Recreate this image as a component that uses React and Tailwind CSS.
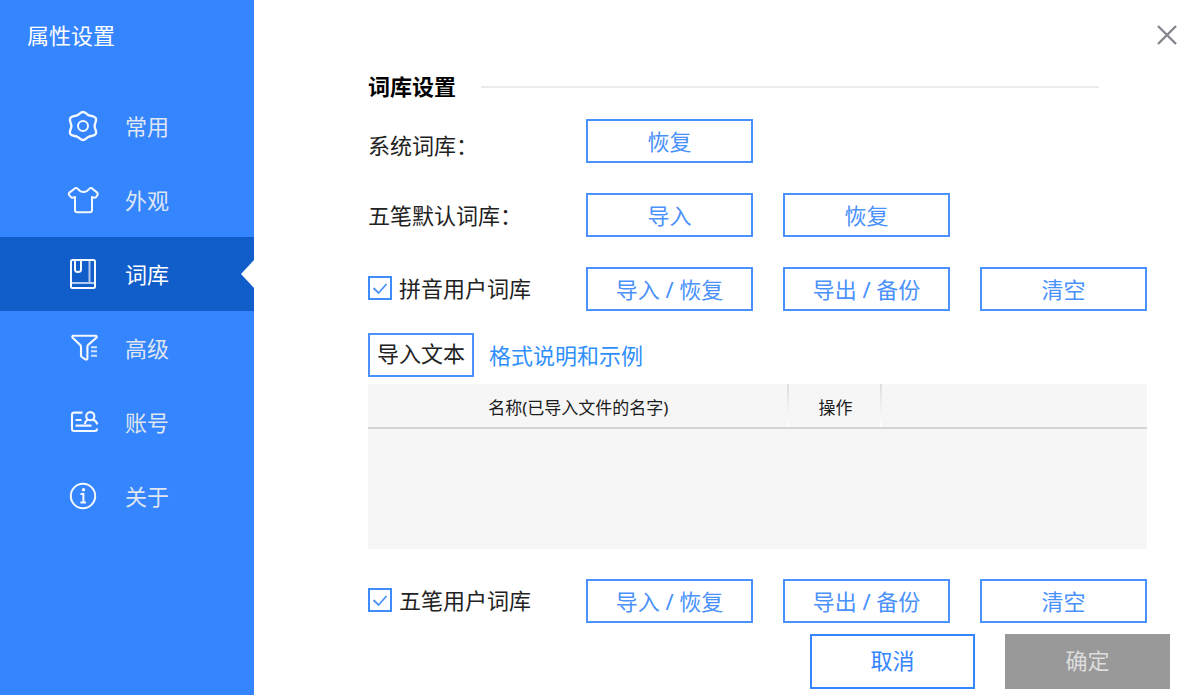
import { useState } from 'react'

const navItems = [
  { id: 'common', label: '常用', icon: GearIcon },
  { id: 'skin', label: '外观', icon: ShirtIcon },
  { id: 'dict', label: '词库', icon: BookIcon },
  { id: 'advanced', label: '高级', icon: FunnelIcon },
  { id: 'account', label: '账号', icon: AccountIcon },
  { id: 'about', label: '关于', icon: InfoIcon },
]

export default function App() {
  const [active, setActive] = useState('dict')

  return (
    <div className="flex min-h-screen bg-white font-['Noto_Sans','Noto_Sans_CJK_SC',sans-serif] text-[22px] leading-6 text-[#222222]">
      <aside className="w-[254px] shrink-0 bg-[#3585ff]">
        <h1 className="px-[27px] pt-[23px] text-white">属性设置</h1>
        <nav className="mt-[42px]">
          {navItems.map(({ id, label, icon: Icon }) => (
            <button
              key={id}
              type="button"
              onClick={() => setActive(id)}
              className={`relative flex h-[74px] w-full items-center gap-[26px] pl-[67px] ${
                active === id ? 'bg-[#115ecb] text-white' : 'text-[#dfe6f2]'
              }`}
            >
              <Icon className="h-8 w-8 shrink-0 text-[#f4f8ff]" />
              <span>{label}</span>
              {active === id && (
                <span className="absolute right-0 top-1/2 -translate-y-1/2 border-y-14 border-r-13 border-y-transparent border-r-white" />
              )}
            </button>
          ))}
        </nav>
      </aside>

      <main className="flex min-w-0 flex-1 flex-col">
        <div className="flex justify-end pr-[23px] pt-[25px]">
          <button type="button" aria-label="关闭" className="text-[#85858f]">
            <svg viewBox="0 0 20 20" className="h-5 w-5" fill="none" stroke="currentColor" strokeWidth="2.4">
              <path d="M1 1l18 18M19 1L1 19" />
            </svg>
          </button>
        </div>

        <section className="pl-[114px] pr-[53px] pt-[30px]">
          <div className="flex items-center gap-[25px] pr-12">
            <h2 className="pb-0.5 font-bold leading-[22px] text-black">词库设置</h2>
            <div className="h-0.5 flex-1 bg-[#ebebeb]" />
          </div>

          <div className="mt-5 space-y-[30px]">
            <Row label={<span className="self-end leading-9">系统词库：</span>}>
              <ActionButton>恢复</ActionButton>
            </Row>
            <Row label={<span>五笔默认词库：</span>}>
              <ActionButton>导入</ActionButton>
              <ActionButton>恢复</ActionButton>
            </Row>
            <UserDictRow label="拼音用户词库" />
          </div>

          <div className="mt-[22px] flex items-center gap-[15px]">
            <button type="button" className="h-11 border-2 border-[#4a91fc] px-[7px] pb-1">
              导入文本
            </button>
            <a href="#format" className="text-[#2f8ffb]">
              格式说明和示例
            </a>
          </div>

          <div className="mt-[7px] mb-[30px] min-h-[165px] bg-[#f6f6f6]">
            <table className="w-full table-fixed text-[17px] text-[#1c1c1c]">
              <thead>
                <tr className="h-11 border-b-2 border-[#d4d4d4]">
                  <HeaderCell className="w-[54%]">名称(已导入文件的名字)</HeaderCell>
                  <HeaderCell className="w-[12%]">操作</HeaderCell>
                  <td />
                </tr>
              </thead>
            </table>
          </div>

          <UserDictRow label="五笔用户词库" />
        </section>

        <footer className="flex justify-end gap-[30px] pb-1.5 pr-[30px] pt-[11px]">
          <button type="button" className="h-[55px] w-[165px] border-2 border-[#3585ff] pb-1 text-[#3585ff]">
            取消
          </button>
          <button type="button" className="h-[55px] w-[165px] bg-[#999999] pb-1 text-[#dddddd]">
            确定
          </button>
        </footer>
      </main>
    </div>
  )
}

function Row({ label, children }) {
  return (
    <div className="flex">
      <div className="flex h-11 w-[218px] shrink-0 items-center">{label}</div>
      <div className="grid flex-1 grid-cols-3 gap-[30px]">{children}</div>
    </div>
  )
}

function UserDictRow({ label }) {
  return (
    <Row
      label={
        <label className="flex items-center gap-[7px] pb-0.5">
          <span className="grid h-6 w-6 place-items-center">
            <input
              type="checkbox"
              defaultChecked
              className="peer col-start-1 row-start-1 h-6 w-6 appearance-none border-2 border-[#3f8afc] bg-white"
            />
            <svg
              viewBox="0 0 24 24"
              className="pointer-events-none invisible col-start-1 row-start-1 h-6 w-6 text-[#4a91fc] peer-checked:visible"
              fill="none"
              stroke="currentColor"
              strokeWidth="1.8"
            >
              <path d="M5.5 12l5 5L18.5 8" />
            </svg>
          </span>
          {label}
        </label>
      }
    >
      <ActionButton>导入 / 恢复</ActionButton>
      <ActionButton>导出 / 备份</ActionButton>
      <ActionButton>清空</ActionButton>
    </Row>
  )
}

function ActionButton({ children }) {
  return (
    <button type="button" className="h-11 border-2 border-[#4a91fc] text-[#4a91fc]">
      {children}
    </button>
  )
}

function HeaderCell({ className, children }) {
  return (
    <th className={`relative pt-1 font-normal ${className}`}>
      {children}
      <span className="absolute inset-y-0 right-0 w-0.5 bg-linear-to-b from-[#dedede] to-white" />
    </th>
  )
}

function GearIcon(props) {
  return (
    <svg viewBox="0 0 32 32" fill="none" stroke="currentColor" strokeWidth="2.4" {...props}>
      <path d="M16 2C18.6 2 19.5 4.5 22 5.4C24.5 6.4 27 5.4 28.8 8.2C30.2 10.8 27.6 13 27.6 16C27.6 19 30.2 21.2 28.8 23.8C27 26.6 24.5 25.6 22 26.6C19.5 27.5 18.6 30 16 30C13.4 30 12.5 27.5 10 26.6C7.5 25.6 5 26.6 3.2 23.8C1.8 21.2 4.4 19 4.4 16C4.4 13 1.8 10.8 3.2 8.2C5 5.4 7.5 6.4 10 5.4C12.5 4.5 13.4 2 16 2Z" />
      <circle cx="16" cy="16" r="5" strokeWidth="2" />
    </svg>
  )
}
function ShirtIcon(props) {
  return (
    <svg viewBox="0 0 32 32" fill="none" stroke="currentColor" strokeWidth="2" strokeLinejoin="round" {...props}>
      <path d="M8.5 4L2.4 8.6Q1.2 9.6 2.1 10.9L4 13.2Q5.2 14.3 8 13V26Q8 28.3 10.3 28.3H22.7Q25 28.3 25 26V13Q27.8 14.3 29 13.2L30.5 10.9Q31.2 9.6 30.2 8.6L24.5 4Q23 3.6 22 5Q20 8 16.5 8Q13 8 11 5Q10 3.6 8.5 4Z" />
    </svg>
  )
}
function BookIcon(props) {
  return (
    <svg viewBox="0 0 32 32" fill="none" stroke="currentColor" strokeWidth="2" {...props}>
      <rect x="4" y="2" width="24" height="28" rx="1.5" />
      <path d="M8 2V11.5Q8 14 11 14T14 11.5V2" />
      <path d="M22.5 2.5V24M4.5 25H27.5" strokeOpacity="0.7" />
    </svg>
  )
}
function FunnelIcon(props) {
  return (
    <svg viewBox="0 0 32 32" fill="none" stroke="currentColor" strokeWidth="2.1" strokeLinejoin="round" {...props}>
      <path d="M6 3.8H29Q30.3 4.4 29.3 5.8L21.5 12.6Q20.4 13.6 20.4 15V26.6Q20 28.2 18.4 27.4L14.8 25Q14 24.4 14 23.5V15Q14 13.6 12.9 12.6L5.6 5.8Q4.8 4.4 6 3.8Z" />
      <path d="M24 15.3H30M24 19.3H30M24 23.8H30" strokeOpacity="0.8" />
    </svg>
  )
}
function AccountIcon(props) {
  return (
    <svg viewBox="0 0 32 32" fill="none" stroke="currentColor" strokeWidth="2.1" {...props}>
      <path d="M15.5 6.6H7Q5 6.6 5 8.6V23Q5 25 7 25H28Q30 25 30 22.5" />
      <path d="M8.5 14H14.5M8.5 19.6H24.5" />
      <circle cx="23.3" cy="10.2" r="4.1" />
      <path d="M17.8 18Q18.5 14.6 21 13.6M25.6 13.6Q29.2 14.8 30.4 18.4" />
    </svg>
  )
}
function InfoIcon(props) {
  return (
    <svg viewBox="0 0 32 32" fill="none" stroke="currentColor" strokeWidth="2" {...props}>
      <circle cx="16" cy="16" r="12.2" />
      <circle cx="16.5" cy="9.8" r="1.7" fill="currentColor" stroke="none" />
      <path d="M13.5 14H16.4V22.4M13.4 22.4H19" />
    </svg>
  )
}
